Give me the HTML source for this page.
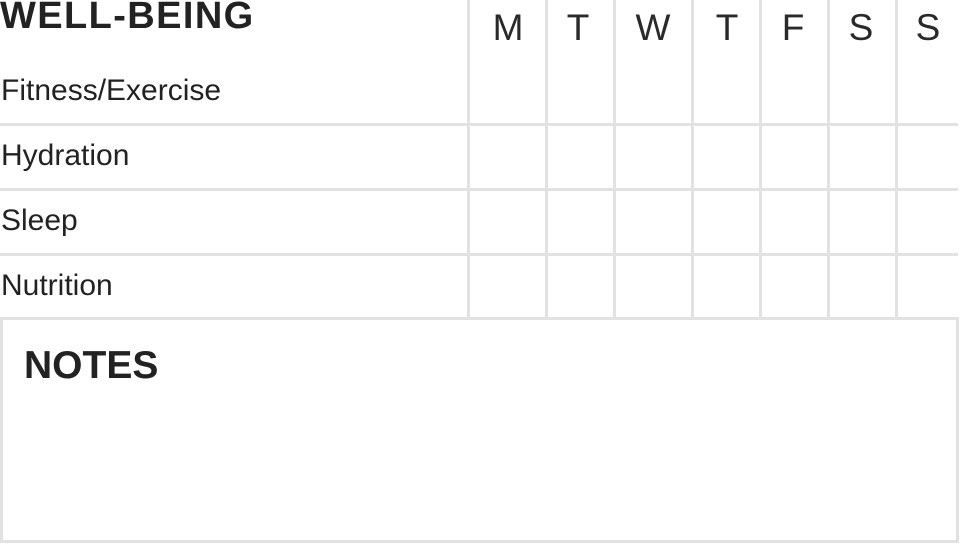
<!DOCTYPE html>
<html><head><meta charset="utf-8"><style>
body{margin:0;width:960px;height:545px;background:#fff;position:relative;overflow:hidden;font-family:"Liberation Sans",sans-serif;color:#222}
.v{position:absolute;top:0;width:3px;height:318px;background:#e2e2e2}
.h{position:absolute;left:0;width:958px;height:3px;background:#e2e2e2}
.t{position:absolute;white-space:nowrap}
.d{position:absolute;top:8px;font-size:37px;transform:translateX(-50%);line-height:40px;color:#2a2a2a}
.r{position:absolute;left:1px;font-size:30px;line-height:30px}
</style></head><body>
<div class="v" style="left:467px"></div>
<div class="v" style="left:545px"></div>
<div class="v" style="left:613px"></div>
<div class="v" style="left:691px"></div>
<div class="v" style="left:759px"></div>
<div class="v" style="left:827px"></div>
<div class="v" style="left:895px"></div>
<div class="h" style="top:123px"></div>
<div class="h" style="top:188px"></div>
<div class="h" style="top:253px"></div>
<div style="position:absolute;left:0;top:317px;width:953px;height:220px;border:3px solid #e2e2e2;background:#fff"></div>
<div class="t" style="left:0;top:-4px;font-size:38px;font-weight:bold;letter-spacing:1.4px;line-height:40px">WELL-BEING</div>
<div class="d" style="left:508px">M</div>
<div class="d" style="left:578px">T</div>
<div class="d" style="left:653px">W</div>
<div class="d" style="left:727px">T</div>
<div class="d" style="left:793px">F</div>
<div class="d" style="left:861px">S</div>
<div class="d" style="left:928px">S</div>
<div class="r" style="top:76px">Fitness/Exercise</div>
<div class="r" style="top:141px">Hydration</div>
<div class="r" style="top:206px">Sleep</div>
<div class="r" style="top:271px">Nutrition</div>
<div class="t" style="left:24px;top:346px;font-size:39px;font-weight:bold;line-height:40px">NOTES</div>
</body></html>
